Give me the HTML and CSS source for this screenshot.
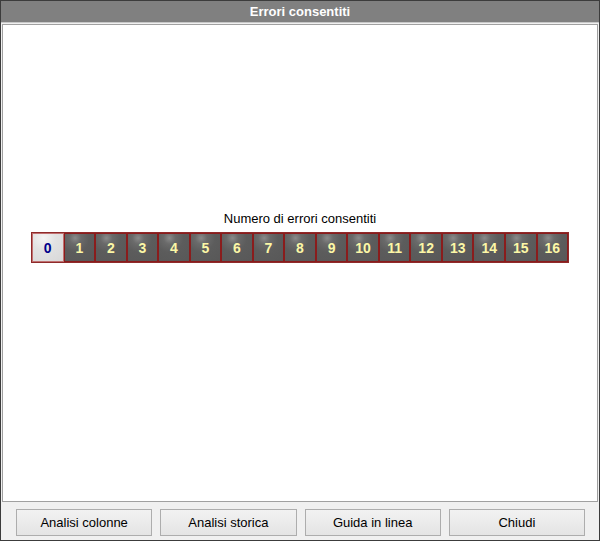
FILE: index.html
```html
<!DOCTYPE html>
<html>
<head>
<meta charset="utf-8">
<link rel="stylesheet" href="styles.css">
</head>
<body>
<div class="window">
  <div class="titlebar">Errori consentiti</div>
  <div class="content">
    <div class="picker">
      <div class="label">Numero di errori consentiti</div>
      <div class="nums">
        <div class="num sel">0</div>
        <div class="num">1</div>
        <div class="num">2</div>
        <div class="num">3</div>
        <div class="num">4</div>
        <div class="num">5</div>
        <div class="num">6</div>
        <div class="num">7</div>
        <div class="num">8</div>
        <div class="num">9</div>
        <div class="num">10</div>
        <div class="num">11</div>
        <div class="num">12</div>
        <div class="num">13</div>
        <div class="num">14</div>
        <div class="num">15</div>
        <div class="num">16</div>
      </div>
    </div>
  </div>
  <div class="footer">
    <button class="btn">Analisi colonne</button>
    <button class="btn">Analisi storica</button>
    <button class="btn">Guida in linea</button>
    <button class="btn">Chiudi</button>
  </div>
</div>
</body>
</html>
```
FILE: styles.css
```css
html, body {
  margin: 0;
  padding: 0;
  background: #f0f0f0;
}
.window {
  width: 600px;
  height: 541px;
  box-sizing: border-box;
  border: 1px solid #3c3c3c;
  background: #f0f0f0;
  display: flex;
  flex-direction: column;
  font-family: "Liberation Sans", Arial, sans-serif;
}
.titlebar {
  height: 21px;
  background: #808080;
  border-bottom: 1px solid #c8c8c8;
  color: #ffffff;
  font-weight: bold;
  font-size: 13px;
  line-height: 21px;
  text-align: center;
}
.content {
  flex: 1;
  margin: 1px 1px 0 1px;
  background: #ffffff;
  border: 1px solid #a0a0a0;
  display: flex;
  align-items: flex-start;
  justify-content: center;
  padding-top: 186px;
}
.picker {
  display: flex;
  flex-direction: column;
  align-items: center;
}
.label {
  font-size: 13px;
  line-height: 15px;
  color: #000;
  margin-bottom: 6px;
}
.nums {
  display: flex;
  width: 536px;
  border: 1px solid #8e2a2a;
  background: #8e2a2a;
}
.num {
  flex: 1;
  height: 29px;
  box-sizing: border-box;
  border: 1px solid #8a1c1c;
  background: radial-gradient(circle at 35% 15%, #8a8a8a 0, #6a6a6a 6px, #5c5c5c 14px, #585858 100%);
  color: #fcf7a6;
  font-weight: bold;
  font-size: 14px;
  display: flex;
  align-items: center;
  justify-content: center;
}
.num.sel {
  background: radial-gradient(circle at 35% 15%, #f4f4f4 0, #e2e2e2 12px, #d8d8d8 100%);
  color: #00008b;
  border-color: #c07070;
}
.footer {
  height: 38px;
  display: flex;
  gap: 8px;
  padding: 7px 14px 0 15px;
  box-sizing: border-box;
}
.btn {
  width: 137px;
  height: 27px;
  border: 1px solid #adadad;
  background: linear-gradient(#f2f2f2, #e4e4e4);
  font-family: "Liberation Sans", Arial, sans-serif;
  font-size: 13px;
  color: #000;
  padding: 0;
}
```
